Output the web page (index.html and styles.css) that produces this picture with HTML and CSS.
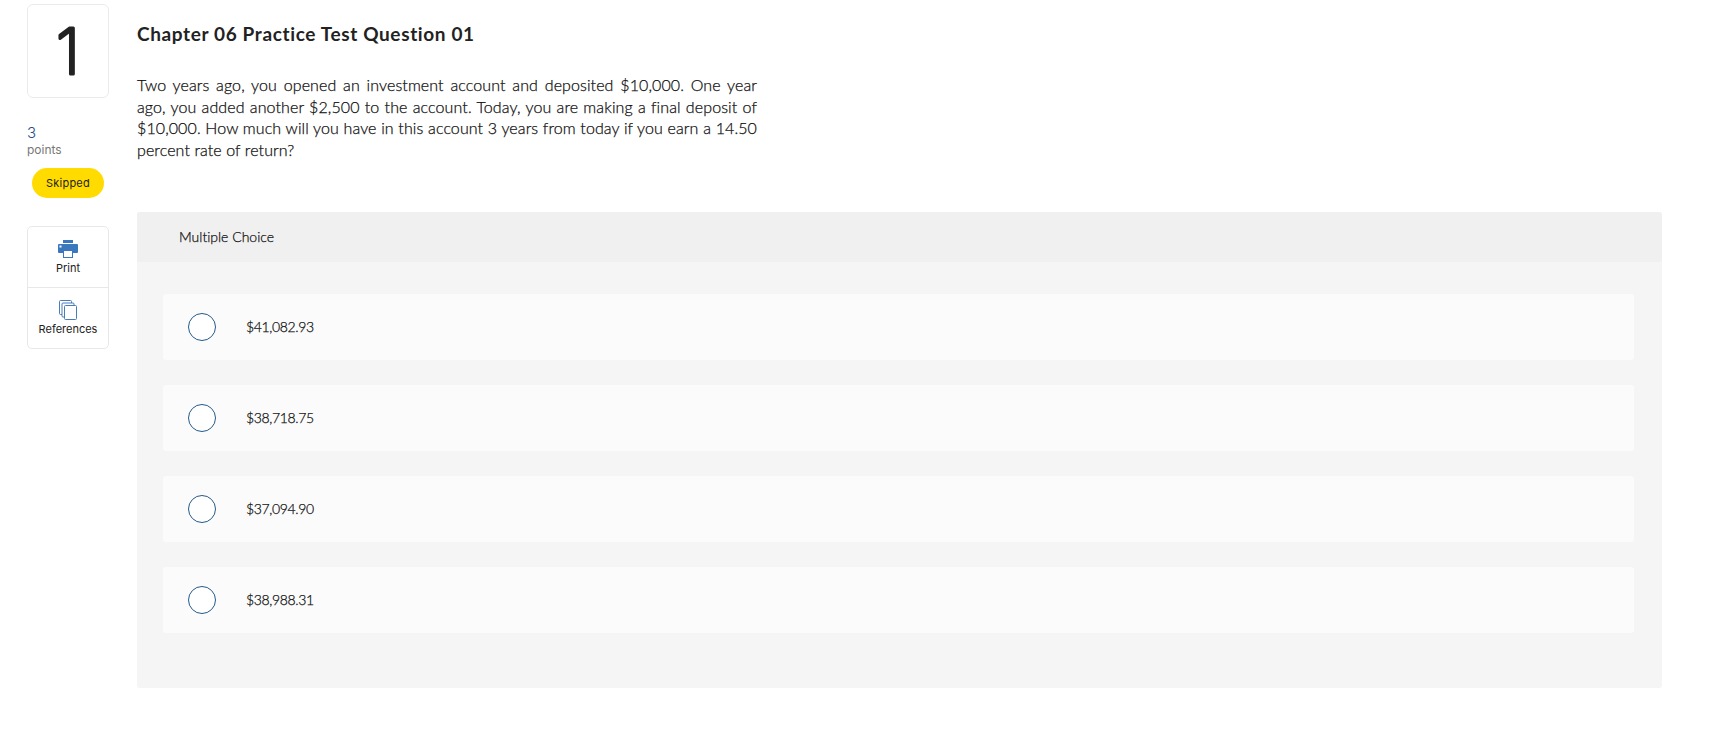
FILE: index.html
```
<!DOCTYPE html>
<html lang="en">
<head>
    <meta charset="UTF-8">
    <meta name="viewport" content="width=device-width, initial-scale=1.0">
    <title>Chapter 06 Practice Test</title>
    <link rel="stylesheet" href="styles.css">
</head>
<body>
    <div class="page">
        <aside class="sidebar">
            <div class="question-number">
                <svg width="80" height="92"><text x="40" y="69">1</text></svg>
            </div>
            <div class="points">
                <span class="points-value">3</span>
                <span class="points-label">points</span>
            </div>
            <div class="status">Skipped</div>
            <div class="tools">
                <button class="tool">
                    <svg width="20" height="18" viewBox="0 0 20 18">
                        <rect x="5" y="0" width="10" height="3" fill="#3a77bd"/>
                        <path d="M1 4h18a1 1 0 0 1 1 1v7a1 1 0 0 1-1 1H1a1 1 0 0 1-1-1V5a1 1 0 0 1 1-1z" fill="#3a77bd"/>
                        <rect x="1.5" y="5.5" width="2" height="2" fill="#fff"/>
                        <rect x="5.5" y="10.5" width="9" height="7" fill="#fff" stroke="#3a77bd"/>
                    </svg>
                    <span>Print</span>
                </button>
                <button class="tool">
                    <svg width="18" height="20" viewBox="0 0 18 20" fill="#fff" stroke="#4a7cba">
                        <rect x=".5" y=".5" width="12" height="14" rx="1"/>
                        <rect x="3" y="3" width="12" height="14" rx="1"/>
                        <rect x="5.5" y="5.5" width="12" height="14" rx="1"/>
                    </svg>
                    <span>References</span>
                </button>
            </div>
        </aside>

        <main class="question">
            <h1>Chapter 06 Practice Test Question 01</h1>
            <p class="prompt">Two years ago, you opened an investment account and deposited $10,000. One year ago, you added another $2,500 to the account. Today, you are making a final deposit of $10,000. How much will you have in this account 3 years from today if you earn a 14.50 percent rate of return?</p>

            <section class="answers">
                <h2>Multiple Choice</h2>
                <div class="choices">
                    <label class="choice"><input type="radio" name="answer"><span>$41,082.93</span></label>
                    <label class="choice"><input type="radio" name="answer"><span>$38,718.75</span></label>
                    <label class="choice"><input type="radio" name="answer"><span>$37,094.90</span></label>
                    <label class="choice"><input type="radio" name="answer"><span>$38,988.31</span></label>
                </div>
            </section>
        </main>
    </div>
</body>
</html>
```

FILE: styles.css
```
* {
    box-sizing: border-box;
}
body {
    margin: 0;
    background-color: #fff;
    color: #222;
    font-family: Lato, "Open Sans", sans-serif;
    font-size: 16px;
    font-variant-ligatures: none;
}
.page {
    display: flex;
    gap: 28px;
    padding: 4px 62px 0 27px;
}
.sidebar {
    width: 82px;
    flex: none;
}
.question-number {
    height: 94px;
    border: 1px solid #ebebeb;
    border-radius: 6px;
}
.question-number svg {
    display: block;
}
.question-number text {
    fill: #222;
    stroke: #222;
    stroke-width: 3px;
    stroke-linejoin: round;
    font-family: Inter, sans-serif;
    font-size: 63px;
    font-weight: 200;
    text-anchor: middle;
}
.points {
    display: flex;
    flex-direction: column;
    margin-top: 27px;
}
.points-value {
    color: #1f4e8c;
    font-family: Inter, sans-serif;
    font-size: 15px;
    font-weight: 300;
    line-height: 16px;
}
.points-label {
    color: #777;
    font-family: Inter, sans-serif;
    font-size: 12px;
    line-height: 17px;
}
.status {
    width: 72px;
    height: 30px;
    margin: 10px auto 28px;
    border-radius: 15px;
    background-color: #ffdb00;
    font-family: Inter, sans-serif;
    font-size: 11px;
    letter-spacing: 0.2px;
    line-height: 30px;
    text-align: center;
}
.tools {
    border: 1px solid #e8e8e8;
    border-radius: 5px;
}
.tool {
    display: flex;
    flex-direction: column;
    align-items: center;
    width: 100%;
    height: 60px;
    padding: 13px 0 0;
    border: none;
    background: none;
    color: #222;
    font-family: Inter, sans-serif;
    font-size: 11px;
}
.tool span {
    margin-top: auto;
    margin-bottom: 12px;
    line-height: 14px;
}
.tool + .tool {
    height: 61px;
    border-top: 1px solid #e8e8e8;
    padding-top: 12px;
}
.question {
    flex: 1;
}
h1 {
    margin: 18px 0 28px;
    font-size: 19px;
    letter-spacing: 0.63px;
    line-height: 24px;
}
.prompt {
    width: 620px;
    margin: 0 0 52px;
    color: #111;
    font-weight: 300;
    letter-spacing: 0.1px;
    line-height: 21.5px;
    text-align: justify;
    -webkit-text-stroke: 0.25px #111;
}
.answers {
    height: 476px;
    border-radius: 3px;
    background-color: #f5f5f5;
    overflow: hidden;
}
h2 {
    margin: 0;
    padding-left: 42px;
    background-color: #f0f0f0;
    color: #111;
    font-size: 14px;
    font-weight: 300;
    line-height: 50px;
    -webkit-text-stroke: 0.25px #111;
}
.choices {
    display: flex;
    flex-direction: column;
    gap: 25px;
    padding: 32px 28px 0 26px;
}
.choice {
    display: flex;
    align-items: center;
    gap: 30px;
    height: 66px;
    padding-left: 25px;
    border-radius: 3px;
    background-color: #fbfbfb;
    color: #111;
    font-size: 14px;
    font-weight: 300;
    letter-spacing: -0.35px;
    -webkit-text-stroke: 0.25px #111;
}
.choice span {
    padding-bottom: 2px;
}
.choice input {
    appearance: none;
    width: 28px;
    height: 28px;
    margin: 0;
    border: 1px solid #24598c;
    border-radius: 50%;
    background-color: #fff;
}
```
